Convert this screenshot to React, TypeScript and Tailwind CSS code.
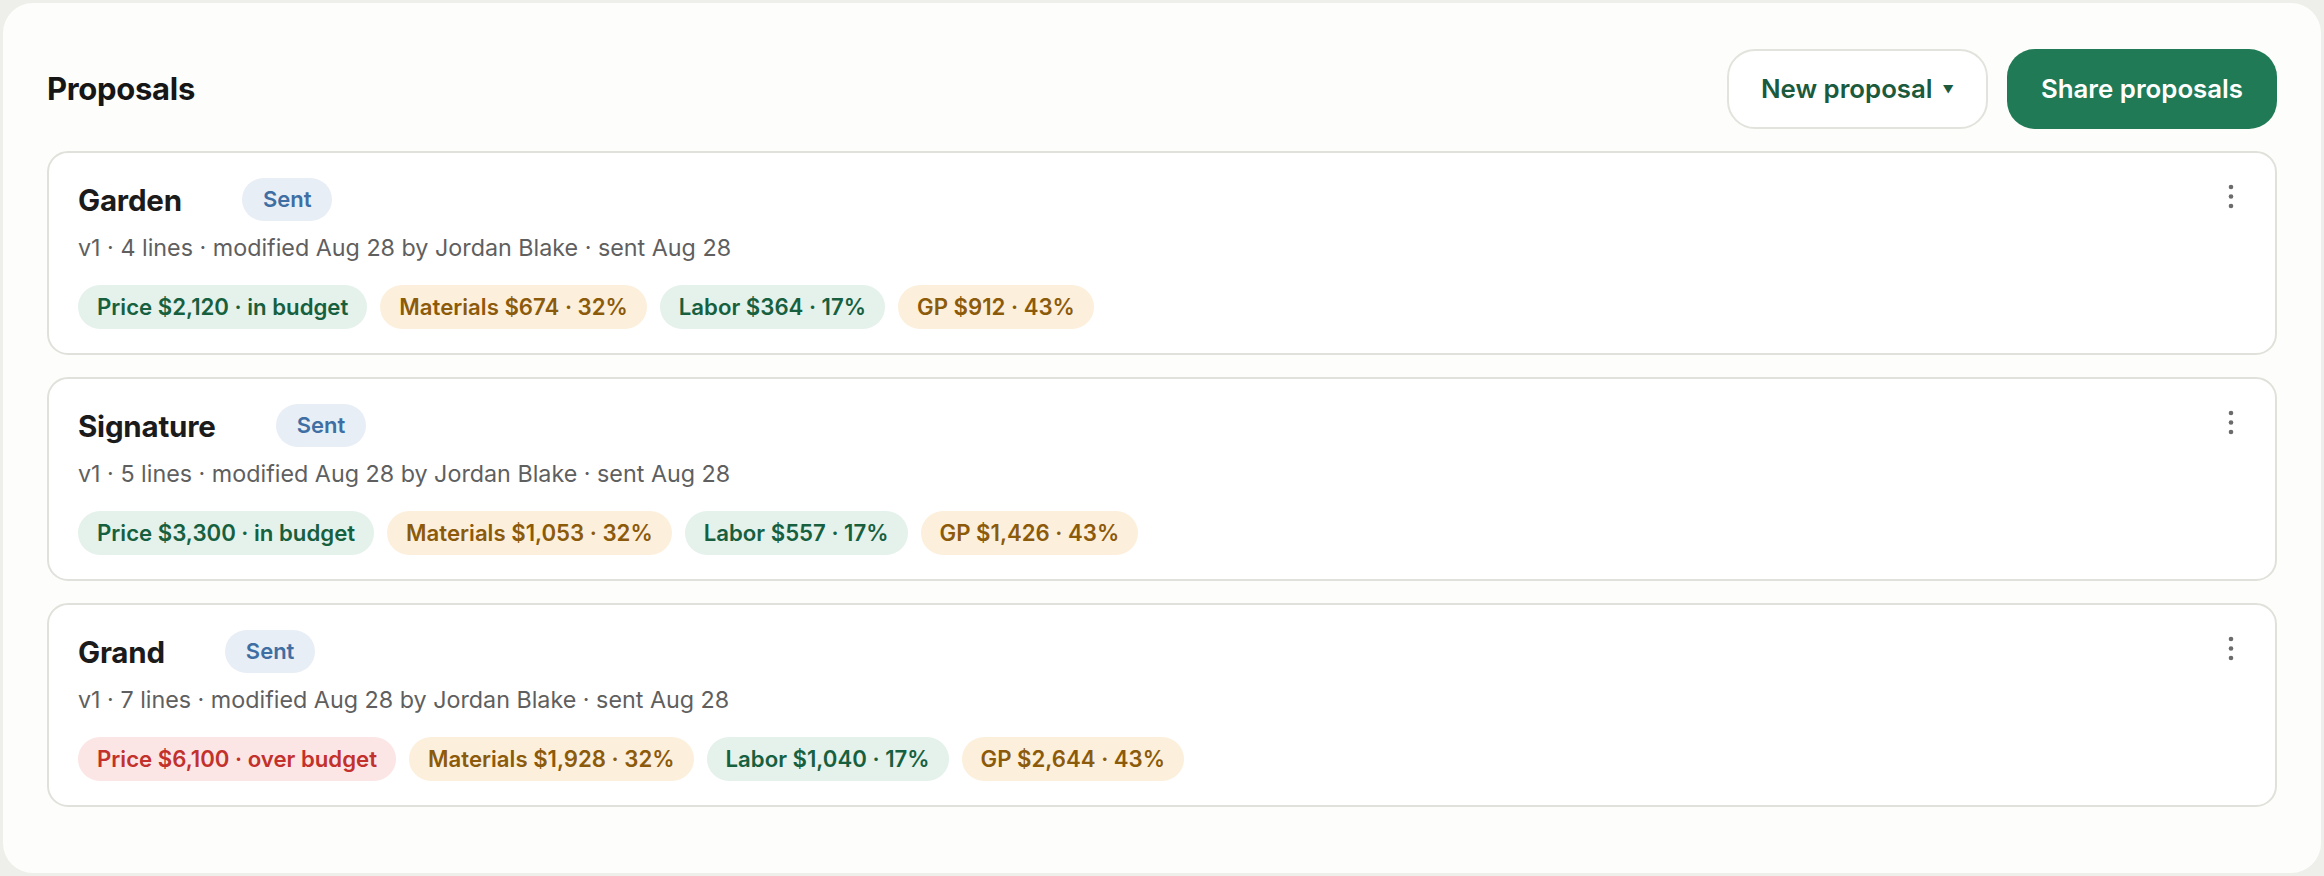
import React from 'react';

type Tone = 'green' | 'amber' | 'red';

interface Chip {
  label: string;
  tone: Tone;
}

interface Proposal {
  name: string;
  lines: number;
  chips: Chip[];
}

const proposals: Proposal[] = [
  {
    name: 'Garden',
    lines: 4,
    chips: [
      { label: 'Price $2,120 · in budget', tone: 'green' },
      { label: 'Materials $674 · 32%', tone: 'amber' },
      { label: 'Labor $364 · 17%', tone: 'green' },
      { label: 'GP $912 · 43%', tone: 'amber' },
    ],
  },
  {
    name: 'Signature',
    lines: 5,
    chips: [
      { label: 'Price $3,300 · in budget', tone: 'green' },
      { label: 'Materials $1,053 · 32%', tone: 'amber' },
      { label: 'Labor $557 · 17%', tone: 'green' },
      { label: 'GP $1,426 · 43%', tone: 'amber' },
    ],
  },
  {
    name: 'Grand',
    lines: 7,
    chips: [
      { label: 'Price $6,100 · over budget', tone: 'red' },
      { label: 'Materials $1,928 · 32%', tone: 'amber' },
      { label: 'Labor $1,040 · 17%', tone: 'green' },
      { label: 'GP $2,644 · 43%', tone: 'amber' },
    ],
  },
];

const toneClass: Record<Tone, string> = {
  green: 'bg-[#e4f2eb] text-[#17603f]',
  amber: 'bg-[#fcf0dc] text-[#8c5a0b]',
  red: 'bg-[#fbe6e5] text-[#c2312c]',
};

function MoreIcon() {
  return (
    <svg width="8" height="26" viewBox="0 0 8 26" className="fill-[#6b6b6b]">
      <circle cx="4" cy="3" r="2.3" />
      <circle cx="4" cy="12.5" r="2.3" />
      <circle cx="4" cy="22" r="2.3" />
    </svg>
  );
}

function ProposalCard({ proposal }: { proposal: Proposal }) {
  return (
    <div className="flex items-start justify-between rounded-[21px] border-2 border-[#e1e1dc] bg-white pl-[29px] pr-[40px] pt-[25px] pb-[24px]">
      <div className="flex flex-col">
        <div className="flex h-[43px] items-center gap-[60px]">
          <span className="text-[29.5px] leading-[40px] font-bold text-[#1b1b1b] tracking-[-0.2px]">
            {proposal.name}
          </span>
          <span className="flex h-[43px] items-center rounded-full bg-[#e8eef6] px-[21px] text-[22px] font-semibold text-[#3f6ea3]">
            Sent
          </span>
        </div>
        <div className="mt-[12px] text-[23.3px] leading-[30px] text-[#5f5f5f]">
          v1 · {proposal.lines} lines · modified Aug 28 by Jordan Blake · sent Aug 28
        </div>
        <div className="mt-[22px] flex gap-[13px]">
          {proposal.chips.map((chip) => (
            <span
              key={chip.label}
              className={`flex h-[44px] items-center rounded-full px-[19px] text-[22.2px] font-semibold ${toneClass[chip.tone]}`}
            >
              {chip.label}
            </span>
          ))}
        </div>
      </div>
      <button className="mt-[6px] flex items-center justify-center">
        <MoreIcon />
      </button>
    </div>
  );
}

export default function App() {
  return (
    <div
      className="min-h-screen bg-[#eeeeea] p-[3px]"
      style={{ fontFamily: 'Inter, "Open Sans", sans-serif' }}
    >
      <div className="flex h-[870px] flex-col rounded-[30px] bg-[#fdfdfb] px-[44px] pt-[46px]">
        <div className="flex items-center justify-between">
          <h1 className="text-[31px] font-bold text-[#161616] tracking-[-0.3px]">Proposals</h1>
          <div className="flex gap-[19px]">
            <button className="flex h-[80px] w-[261px] items-center justify-center gap-[10px] rounded-[28px] border-2 border-[#e3e3dd] bg-white text-[25.8px] font-semibold text-[#1b5a3c]">
              New proposal
              <span className="text-[11px]">▼</span>
            </button>
            <button className="flex h-[80px] w-[270px] items-center justify-center rounded-[28px] bg-[#207a55] text-[25.8px] font-semibold text-white">
              Share proposals
            </button>
          </div>
        </div>
        <div className="mt-[22px] flex flex-col gap-[22px]">
          {proposals.map((p) => (
            <ProposalCard key={p.name} proposal={p} />
          ))}
        </div>
      </div>
    </div>
  );
}
